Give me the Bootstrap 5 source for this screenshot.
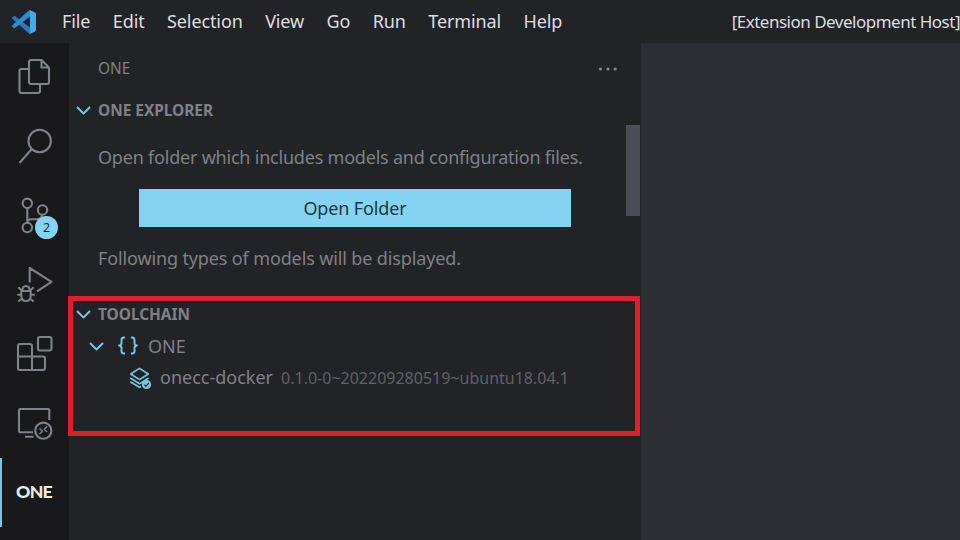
<!DOCTYPE html>
<html lang="en">
<head>
<meta charset="utf-8">
<meta name="viewport" content="width=device-width, initial-scale=1">
<title>Extension Development Host</title>
<link href="https://cdn.jsdelivr.net/npm/bootstrap@5.3.0/dist/css/bootstrap.min.css" rel="stylesheet">
<style>
  :root { --side: #222327; --rail: #19191b; --editor: #2d2e33; --dim: #7f8187; --accent: #85d3f2; }
  body { font-family: "Noto Sans", "Open Sans", sans-serif; font-size: 18px; line-height: 24px; color: var(--dim); background: var(--side); }
  .app { width: 960px; height: 540px; }
  .titlebar { height: 43px; color: #dddee0; padding-left: 12px; }
  .titlebar a { color: inherit; line-height: 43px; letter-spacing: -.1px; }
  .titlebar svg { margin-right: 26px; }
  .menu { gap: 22.4px; }
  .host { font-size: 17px; line-height: 43px; margin-left: auto; letter-spacing: -.5px; }
  .rail { width: 69px; background: var(--rail); }
  .rail-item { width: 69px; height: 69px; }
  .rail-item svg, .ico { display: block; fill: none; stroke: #808289; stroke-width: 2.1; stroke-linejoin: round; }
  .ico { stroke-width: 1.9; }
  .count { left: 35px; top: 35px; width: 23px; height: 23px; border-radius: 50%; background: var(--accent); color: #1f2b33; font-size: 12.5px; line-height: 24px; }
  .current { margin-top: 1px; border-left: 2px solid #74cbd8; padding-right: 3px; color: #e9e9ea; font: 900 17.7px/68px Lato, sans-serif; letter-spacing: -.8px; }
  .side { width: 572px; background: var(--side); }
  .side-title { height: 51px; padding: 0 22px 0 29px; font-size: 15.4px; }
  .side-title span { padding-top: 1px; }
  .section-head { font-size: 15.4px; font-weight: 700; }
  .section-head span { padding-top: 2px; }
  .explorer-head { height: 32px; padding-left: 7px; }
  .welcome { height: 170px; padding: 19px 0 0 29px; }
  .long-line { letter-spacing: -.21px; }
  .short-line { letter-spacing: -.13px; }
  .open-btn { width: 432px; height: 38px; margin: 20px 0 19px 41px; background: var(--accent); color: #1f3540; font-size: 18px; letter-spacing: -.13px; --bs-btn-border-width: 0; --bs-btn-hover-bg: #9bdcf5; }
  .thumb { right: 1px; top: -1px; width: 14px; height: 91px; background: #4b4f55; }
  .toolchain { width: 572px; height: 140px; margin-left: -1px; border: 5px solid #dd2029; padding-left: 3px; }
  .tool-head { height: 29px; padding-bottom: 3px; }
  .ico.cy { stroke: #74c9e2; }
  .t-row { height: 32px; }
  .t-leaf span { padding-bottom: 2px; }
  .t-leaf .ver { padding-bottom: 0; }
  .ver { font-size: 16px; color: #5f6166; }
  .editor { background: var(--editor); }
</style>
</head>
<body class="overflow-hidden">
<div class="app d-flex flex-column overflow-hidden">
  <header class="titlebar d-flex align-items-center flex-shrink-0 text-nowrap">
    <svg width="24" height="24" viewBox="0 0 100 100" aria-hidden="true">
      <path fill="#2779b8" d="M1.4 30.3 6.9 25.2a4.2 4.2 0 0 1 5.3-.2L75 72.700V99a6.200 6.200 0 0 1-6-2L1.400 36.400a4.200 4.200 0 0 1 0-6.100z"/>
      <path fill="#2d8ccf" d="M1.400 69.700 6.900 74.800a4.200 4.200 0 0 0 5.300.2L75 27.300V1a6.200 6.200 0 0 0-6 2L1.400 63.600a4.200 4.200 0 0 0 0 6.100z"/>
      <path fill="#43a7ec" d="M75.900.9 96.500 10.800A6.200 6.200 0 0 1 100 16.400V83.600a6.200 6.200 0 0 1-3.500 5.600L75.900 99.100a6.200 6.200 0 0 1-7.100-1.200C71 100 75 98 75 94.800V5.200C75 2 71 0 68.800 2.100A6.200 6.200 0 0 1 75.900.9z"/>
    </svg>
    <nav class="menu d-flex" aria-label="Menu">
      <a class="text-decoration-none" href="#">File</a>
      <a class="text-decoration-none" href="#">Edit</a>
      <a class="text-decoration-none" href="#">Selection</a>
      <a class="text-decoration-none" href="#">View</a>
      <a class="text-decoration-none" href="#">Go</a>
      <a class="text-decoration-none" href="#">Run</a>
      <a class="text-decoration-none" href="#">Terminal</a>
      <a class="text-decoration-none" href="#">Help</a>
    </nav>
    <span class="host">[Extension Development Host]</span>
  </header>
  <div class="d-flex flex-grow-1">
    <nav class="rail d-flex flex-column flex-shrink-0" aria-label="Views">
      <div class="rail-item"><svg width="69" height="69" viewBox="0 43 69 69"><path d="M28 69H21.500Q19.500 69 19.500 71V91Q19.500 93 21.500 93H38Q40 93 40 91V85M41.500 60H31Q29 60 29 62V82Q29 84 31 84H47Q49 84 49 82V67.500ZM41.500 60V67.500H49"/></svg></div>
      <div class="rail-item"><svg width="69" height="69" viewBox="0 112 69 69"><circle cx="39.700" cy="141" r="11.200"/><path d="M31.800 149 19.500 163"/></svg></div>
      <div class="rail-item position-relative"><svg width="69" height="69" viewBox="0 181 69 69"><circle cx="27.300" cy="203.300" r="4.700"/><circle cx="42.500" cy="210" r="4.700"/><circle cx="27.300" cy="227.500" r="4.700"/><path d="M27.300 208V223Q27.500 219.200 31.500 219.200H37Q41.500 219.200 42.300 215"/></svg><span class="count position-absolute text-center">2</span></div>
      <div class="rail-item"><svg width="69" height="69" viewBox="0 250 69 69"><path d="M29.700 282.500V268L51.500 281.800 37 291.300M21.300 291H30.700V295.500Q30.700 301 26 301T21.300 295.500ZM22.300 291Q22.300 286 26 286T29.700 291M17.300 294.800H21.300M30.700 294.800H34.700M18.300 287.300 21.800 290.500M33.700 287.300 30.200 290.500M18.300 301.500 22 298.500M33.700 301.500 30 298.500"/></svg></div>
      <div class="rail-item"><svg width="69" height="69" viewBox="0 319 69 69"><path d="M20 344H30Q32 344 32 346V356.500H43Q45 356.500 45 358.500V368Q45 370 43 370H20Q18 370 18 368V346Q18 344 20 344ZM18 356.500H32V370"/><rect x="38" y="337" width="13.500" height="13.500" rx="2"/></svg></div>
      <div class="rail-item"><svg width="69" height="69" viewBox="0 388 69 69"><path d="M33 432.300H20Q19 432.300 19 431.300V410Q19 409 20 409H48.300Q49.300 409 49.300 410V420M25 436.700H33.500"/><circle cx="43.300" cy="430.700" r="8.100"/><path stroke-width="1.500" d="M39.500 428.500 42.500 431.300 39.500 434M47.200 426.500 44.200 429.300 47.200 432"/></svg></div>
      <div class="rail-item current text-center">ONE</div>
    </nav>
    <aside class="side flex-shrink-0">
      <div class="side-title d-flex align-items-center justify-content-between"><span>ONE</span>
        <svg width="22" height="6" viewBox="0 0 22 6" fill="#85878c"><circle cx="3.500" cy="3" r="1.600"/><circle cx="11" cy="3" r="1.600"/><circle cx="18.200" cy="3" r="1.600"/></svg></div>
      <section>
        <div class="section-head explorer-head d-flex align-items-center"><svg class="ico cy" width="22" height="16"><path d="M1 5 7.500 11.500 14 5"/></svg><span>ONE EXPLORER</span></div>
        <div class="welcome position-relative text-nowrap">
          <p class="long-line mb-0">Open folder which includes models and configuration files.</p>
          <button type="button" class="btn open-btn rounded-0 p-0 d-block">Open Folder</button>
          <p class="short-line mb-0">Following types of models will be displayed.</p>
          <div class="thumb position-absolute"></div>
        </div>
      </section>
      <section class="toolchain text-nowrap">
        <div class="section-head tool-head d-flex align-items-center"><svg class="ico cy" width="22" height="16"><path d="M1 5 7.500 11.500 14 5"/></svg><span>TOOLCHAIN</span></div>
        <div class="t-row d-flex align-items-center"><svg class="ico cy" width="72" height="32" viewBox="76 330 72 32"><path d="M90 343 96.500 349.500 103 343"/><path stroke-width="1.900" d="M125 337.500H124Q121.500 337.500 121.500 340V343Q121.500 345.500 119 345.500 121.500 345.500 121.500 348V351Q121.500 353.500 124 353.500H125M131 337.500H132Q134.500 337.500 134.500 340V343Q134.500 345.500 137 345.500 134.500 345.500 134.500 348V351Q134.500 353.500 132 353.500H131"/></svg><span>ONE</span></div>
        <div class="t-row t-leaf d-flex align-items-center"><svg class="ico cy" width="84" height="32" viewBox="76 362 84 32"><path stroke-width="1.600" d="M139.500 368.300 148.300 374 139.500 379.700 130.700 374ZM130.300 378 139.500 383.800 148.500 378M130.300 381.800 139.500 387.300 141 386.500"/><circle cx="146.500" cy="384.500" r="4.600" fill="#74c9e2" stroke="none"/><path stroke="#222327" stroke-width="1.200" d="M144.300 384.700 146 386.300 148.800 383"/></svg><span>onecc-docker</span><span class="ver ms-2">0.1.0-0~202209280519~ubuntu18.04.1</span></div>
      </section>
    </aside>
    <main class="editor flex-grow-1"></main>
  </div>
</div>
<script src="https://cdn.jsdelivr.net/npm/bootstrap@5.3.0/dist/js/bootstrap.bundle.min.js"></script>
</body>
</html>
